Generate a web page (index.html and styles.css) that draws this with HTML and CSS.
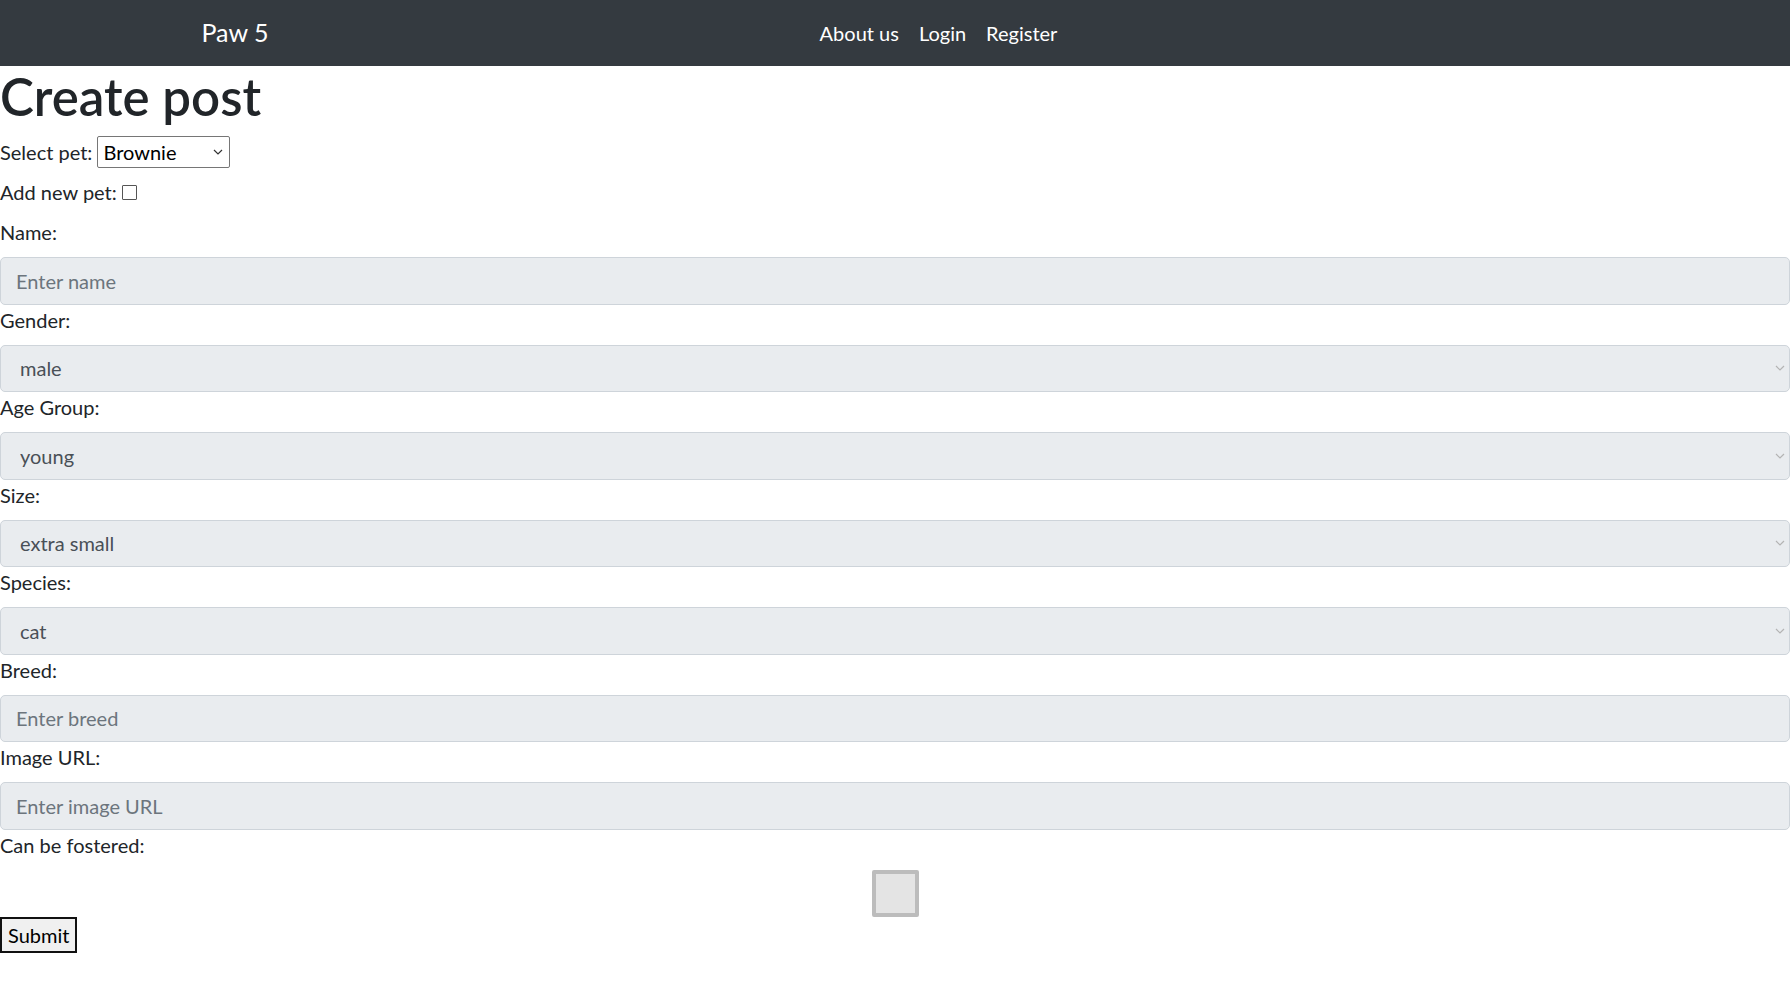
FILE: index.html
```html
<!DOCTYPE html>
<html>
<head>
    <title>Create post</title>
    <link rel="stylesheet" href="styles.css">
</head>
<body>
    <nav class="navbar">
        <div class="navbar-inner">
            <a class="navbar-brand" href="#">Paw 5</a>
            <div class="navbar-links">
                <a href="#">About us</a>
                <a href="#">Login</a>
                <a href="#">Register</a>
            </div>
        </div>
    </nav>

    <h1>Create post</h1>

    <form class="post-form">
        <div class="form-row">
            <label>Select pet:</label>
            <select class="pet-select">
                <option>Brownie</option>
            </select>
        </div>
        <div class="form-row">
            <label>Add new pet:</label><input type="checkbox" class="small-check">
        </div>

        <label>Name:</label>
        <input type="text" class="form-control" placeholder="Enter name" disabled>

        <label>Gender:</label>
        <select class="form-control" disabled>
            <option>male</option>
        </select>

        <label>Age Group:</label>
        <select class="form-control" disabled>
            <option>young</option>
        </select>

        <label>Size:</label>
        <select class="form-control" disabled>
            <option>extra small</option>
        </select>

        <label>Species:</label>
        <select class="form-control" disabled>
            <option>cat</option>
        </select>

        <label>Breed:</label>
        <input type="text" class="form-control" placeholder="Enter breed" disabled>

        <label>Image URL:</label>
        <input type="text" class="form-control" placeholder="Enter image URL" disabled>

        <label>Can be fostered:</label>
        <div class="foster-box">
            <input type="checkbox" class="big-check" disabled>
        </div>

        <button type="button" class="submit-btn">Submit</button>
    </form>
</body>
</html>
```

FILE: styles.css
```css
body {
    margin: 0;
    font-family: Lato, "Open Sans", sans-serif;
    font-size: 20px;
    line-height: 1.5;
    color: #212529;
    background: white;
}
.navbar {
    background: #343a40;
    height: 66px;
    display: flex;
    align-items: center;
}
.navbar-inner {
    width: 1425px;
    margin: 0 auto;
    padding: 0 19px;
    box-sizing: border-box;
    display: flex;
    align-items: center;
}
.navbar-brand {
    color: white;
    text-decoration: none;
    font-size: 25px;
    margin-right: 20px;
}
.navbar-links {
    flex: 1;
    display: flex;
    justify-content: center;
}
.navbar-links a {
    color: white;
    text-decoration: none;
    padding: 0 10px;
}
h1 {
    margin: 0 0 9px 0;
    font-size: 51px;
    font-weight: 600;
    line-height: 1.2;
}
label {
    display: inline-block;
    margin-bottom: 10px;
}
.pet-select {
    font: inherit;
    color: black;
    width: 133px;
    height: 32px;
    padding: 0 5px;
    border: 1px solid #767676;
    border-radius: 2px;
    background: white url("data:image/svg+xml,%3Csvg xmlns='http://www.w3.org/2000/svg' width='10' height='6'%3E%3Cpath d='M1 1l4 4 4-4' fill='none' stroke='%23333' stroke-width='1.2'/%3E%3C/svg%3E") no-repeat right 6px center;
    appearance: none;
}
.small-check {
    appearance: none;
    width: 15px;
    height: 15px;
    margin: 0 0 0 5px;
    border: 1.5px solid #555;
    border-radius: 1px;
    background: white;
    vertical-align: 0;
}
.form-control {
    display: block;
    width: 100%;
    height: 47.5px;
    box-sizing: border-box;
    padding: 7.5px 15px;
    font: inherit;
    color: #495057;
    opacity: 1;
    background-color: #e9ecef;
    border: 1px solid #ced4da;
    border-radius: 5px;
    margin: 0;
}
.form-control::placeholder {
    color: #6c757d;
    opacity: 1;
}
select.form-control {
    appearance: none;
    padding-left: 19px;
    background-image: url("data:image/svg+xml,%3Csvg xmlns='http://www.w3.org/2000/svg' width='10' height='6'%3E%3Cpath d='M1 1l4 4 4-4' fill='none' stroke='%23b4b4b4' stroke-width='1.2'/%3E%3C/svg%3E");
    background-repeat: no-repeat;
    background-position: right 4px center;
}
.foster-box {
    display: flex;
    justify-content: center;
}
.big-check {
    appearance: none;
    width: 47px;
    height: 47px;
    margin: 0;
    box-sizing: border-box;
    border: 4px solid #bcbcbc;
    border-radius: 2px;
    background: #e4e4e4;
    opacity: 1;
}
.submit-btn {
    display: block;
    font: inherit;
    color: black;
    background: #f0f0f0;
    border: 2px solid #111;
    padding: 1px 6px;
    margin: 0;
}
```
